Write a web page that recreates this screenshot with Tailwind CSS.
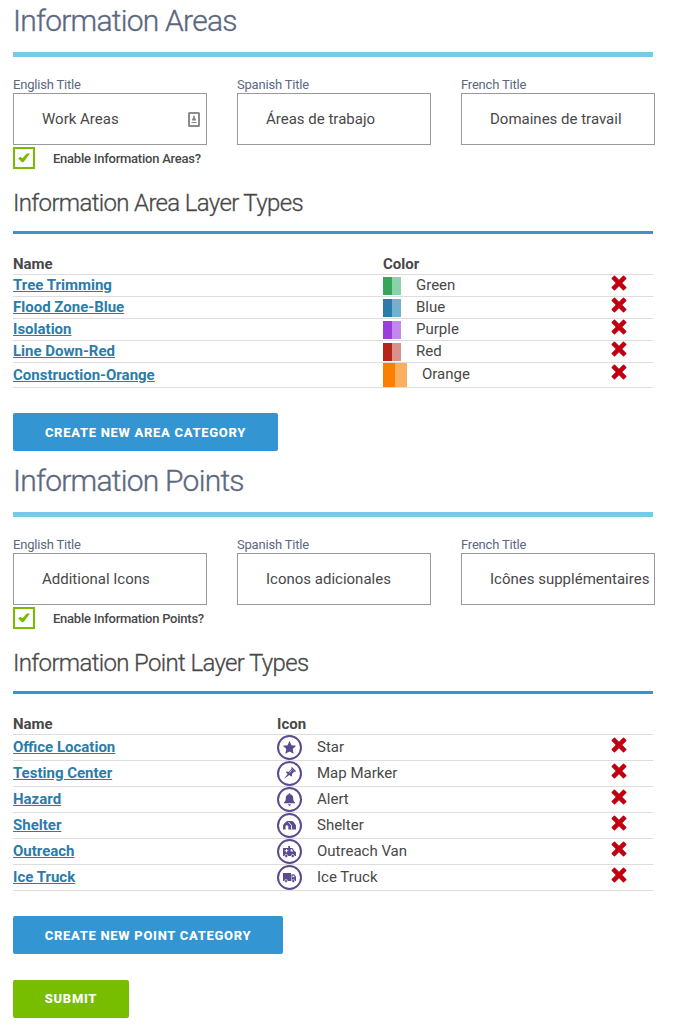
<!DOCTYPE html>
<html lang="en">
<head>
<meta charset="utf-8">
<title>Information Areas</title>
<script src="https://cdn.jsdelivr.net/npm/@tailwindcss/browser@4"></script>
</head>
<body class="bg-white font-[Roboto,sans-serif] text-[#484848]">
<svg class="hidden">
  <symbol id="x" viewBox="0 0 16 16"><path d="M.7 3 3 .7Q3.500.3 4 .7L8 4.700 12 .7Q12.500.3 13 .7L15.300 3Q15.700 3.500 15.300 4L11.300 8 15.300 12Q15.700 12.500 15.300 13L13 15.300Q12.500 15.700 12 15.300L8 11.300 4 15.300Q3.500 15.700 3 15.300L.7 13Q.3 12.500.7 12L4.700 8 .7 4Q.3 3.500.7 3Z" fill="#c00010"/></symbol>
  <symbol id="check" viewBox="0 0 12 10"><path d="M.2 5.500 2.300 3.800 4.500 5.300 8.700.4H12L6 8.600Q4.800 10 3.700 8.900Z" fill="#78be00"/></symbol>
</svg>
<main class="ml-[13px] w-[640px]">
  <section class="h-[460px]">
    <h1 class="h-[57px] border-b-5 border-[#79c9e8] pt-[3px] text-[30px] leading-[36px] font-light tracking-[-0.75px] text-[#5b6880] [-webkit-text-stroke:0.35px]">Information Areas</h1>
    <div class="mt-5 flex w-[642px] gap-[30px] text-[15px]">
      <label class="w-[194px]"><span class="block h-4 text-[13px] leading-4 tracking-[-0.2px] text-[#5b6880]">English Title</span>
        <span class="flex h-[52px] items-center justify-between border border-[#999] pr-[6px] pl-7">Work Areas
          <svg class="h-[15px] w-3" viewBox="0 0 12 15"><rect x="1" y="1" width="10" height="13" rx=".5" fill="#fff" stroke="#8b8b8b" stroke-width="2"/><path d="M6 3.500V6M3.500 10.500H8.500" stroke="#888" stroke-width="1"/><path d="M4 8.500V7.200L5 6V4.500H7V6L8 7.200V8.500Z" fill="#888"/></svg>
        </span></label>
      <label class="w-[194px]"><span class="block h-4 text-[13px] leading-4 tracking-[-0.2px] text-[#5b6880]">Spanish Title</span><span class="flex h-[52px] items-center border border-[#999] pl-7">Áreas de trabajo</span></label>
      <label class="w-[194px]"><span class="block h-4 text-[13px] leading-4 tracking-[-0.2px] text-[#5b6880]">French Title</span><span class="flex h-[52px] items-center border border-[#999] pl-7">Domaines de travail</span></label>
    </div>
    <div class="mt-[2px] flex h-[22px] items-center gap-[18px] text-[13px] font-medium tracking-[-0.24px]"><span class="flex size-[22px] items-center justify-center border-2 border-[#78be00]"><svg class="h-[10px] w-3"><use href="#check"/></svg></span><span class="pt-[2px]">Enable Information Areas?</span></div>
    <h2 class="mt-[17px] h-12 border-b-3 border-[#3395d1] pt-[3px] text-[24px] leading-[28px] font-light tracking-[-0.65px] [-webkit-text-stroke:0.3px]">Information Area Layer Types</h2>
    <div class="mt-5 text-[15px] leading-5">
      <div class="flex h-[21px] border-b border-[#ddd] font-bold"><span class="w-[370px]">Name</span><span>Color</span></div>
      <div class="flex h-[22px] border-b border-[#ddd]"><a class="w-[370px] font-bold text-[#2b7ca9] underline">Tree Trimming</a><span class="mt-[2px] h-[18px] w-[9px] bg-[#34a75a]"></span><span class="mt-[2px] h-[18px] w-[9px] bg-[#8ad2ab]"></span><span class="ml-[15px] w-[194px]">Green</span><svg class="ml-px size-4"><use href="#x"/></svg></div>
      <div class="flex h-[22px] border-b border-[#ddd]"><a class="w-[370px] font-bold text-[#2b7ca9] underline">Flood Zone-Blue</a><span class="mt-[2px] h-[18px] w-[9px] bg-[#2b7ca9]"></span><span class="mt-[2px] h-[18px] w-[9px] bg-[#74b0cd]"></span><span class="ml-[15px] w-[194px]">Blue</span><svg class="ml-px size-4"><use href="#x"/></svg></div>
      <div class="flex h-[22px] border-b border-[#ddd]"><a class="w-[370px] font-bold text-[#2b7ca9] underline">Isolation</a><span class="mt-[2px] h-[18px] w-[9px] bg-[#9c3cdb]"></span><span class="mt-[2px] h-[18px] w-[9px] bg-[#c388ec]"></span><span class="ml-[15px] w-[194px]">Purple</span><svg class="ml-px size-4"><use href="#x"/></svg></div>
      <div class="flex h-[22px] border-b border-[#ddd]"><a class="w-[370px] font-bold text-[#2b7ca9] underline">Line Down-Red</a><span class="mt-[2px] h-[18px] w-[9px] bg-[#b72518]"></span><span class="mt-[2px] h-[18px] w-[9px] bg-[#d9918b]"></span><span class="ml-[15px] w-[194px]">Red</span><svg class="ml-px size-4"><use href="#x"/></svg></div>
      <div class="flex h-[25px] border-b border-[#ddd]"><a class="w-[370px] pt-[2px] font-bold text-[#2b7ca9] underline">Construction-Orange</a><span class="h-6 w-3 bg-[#f98000]"></span><span class="h-6 w-3 bg-[#fbb060]"></span><span class="ml-[15px] w-[188px] pt-px">Orange</span><svg class="mt-px ml-px size-4"><use href="#x"/></svg></div>
    </div>
    <button class="mt-[25px] block h-[38px] w-[265px] rounded-[2px] bg-[#3395d1] pt-[2px] text-[13px] font-extrabold tracking-[0.7px] text-white">CREATE NEW AREA CATEGORY</button>
  </section>
  <section>
    <h1 class="h-[57px] border-b-5 border-[#79c9e8] pt-[3px] text-[30px] leading-[36px] font-light tracking-[-0.75px] text-[#5b6880] [-webkit-text-stroke:0.35px]">Information Points</h1>
    <div class="mt-5 flex w-[642px] gap-[30px] text-[15px]">
      <label class="w-[194px]"><span class="block h-4 text-[13px] leading-4 tracking-[-0.2px] text-[#5b6880]">English Title</span><span class="flex h-[52px] items-center border border-[#999] pl-7">Additional Icons</span></label>
      <label class="w-[194px]"><span class="block h-4 text-[13px] leading-4 tracking-[-0.2px] text-[#5b6880]">Spanish Title</span><span class="flex h-[52px] items-center border border-[#999] pl-7">Iconos adicionales</span></label>
      <label class="w-[194px]"><span class="block h-4 text-[13px] leading-4 tracking-[-0.2px] text-[#5b6880]">French Title</span><span class="flex h-[52px] items-center border border-[#999] pl-7 whitespace-nowrap">Icônes supplémentaires</span></label>
    </div>
    <div class="mt-[2px] flex h-[22px] items-center gap-[18px] text-[13px] font-medium tracking-[-0.24px]"><span class="flex size-[22px] items-center justify-center border-2 border-[#78be00]"><svg class="h-[10px] w-3"><use href="#check"/></svg></span><span class="pt-[2px]">Enable Information Points?</span></div>
    <h2 class="mt-[17px] h-12 border-b-3 border-[#3395d1] pt-[3px] text-[24px] leading-[28px] font-light tracking-[-0.65px] [-webkit-text-stroke:0.3px]">Information Point Layer Types</h2>
    <div class="mt-5 text-[15px] leading-5">
      <div class="flex h-[21px] border-b border-[#ddd] font-bold"><span class="w-[264px]">Name</span><span>Icon</span></div>
      <div class="flex h-[26px] border-b border-[#ddd]"><a class="w-[264px] pt-[2px] font-bold text-[#2b7ca9] underline">Office Location</a>
        <svg class="size-[25px]" viewBox="0 0 25 25" fill="#5b4a90"><circle cx="12.500" cy="12.500" r="11.500" fill="none" stroke="#5b4a90" stroke-width="2"/><path d="m12.500 6 2 4.200 4.600.6-3.400 3.200.9 4.700-4.100-2.300-4.100 2.300.9-4.700L5.900 10.800l4.600-.6Z"/></svg>
        <span class="ml-[15px] w-[293px] pt-[2px]">Star</span><svg class="mt-[2px] ml-px size-4"><use href="#x"/></svg></div>
      <div class="flex h-[26px] border-b border-[#ddd]"><a class="w-[264px] pt-[2px] font-bold text-[#2b7ca9] underline">Testing Center</a>
        <svg class="size-[25px]" viewBox="0 0 25 25" fill="#5b4a90"><circle cx="12.500" cy="12.500" r="11.500" fill="none" stroke="#5b4a90" stroke-width="2"/><path d="m14.600 7.500 3.200 3.200-1.600.8-1.300 1.400.2 2-1 .7-1.800-1.600L7 18l3.600-5-1.700-1.700.9-.8 2.100.2 1.600-1.600Z"/><path d="m14.500 6.500 4 4" stroke="#5b4a90" stroke-width="1.200"/><path d="m12.300 11.800 2.500-2.500" stroke="#fff" stroke-width=".7"/></svg>
        <span class="ml-[15px] w-[293px] pt-[2px]">Map Marker</span><svg class="mt-[2px] ml-px size-4"><use href="#x"/></svg></div>
      <div class="flex h-[26px] border-b border-[#ddd]"><a class="w-[264px] pt-[2px] font-bold text-[#2b7ca9] underline">Hazard</a>
        <svg class="size-[25px]" viewBox="0 0 25 25" fill="#5b4a90"><circle cx="12.500" cy="12.500" r="11.500" fill="none" stroke="#5b4a90" stroke-width="2"/><path d="M11.800 6.200h1.400v1c2.200.5 3 2 3 3.800 0 2.500.5 3.500 1.800 4.300v1H7v-1C8.300 14.500 8.800 13.500 8.800 11c0-1.800.8-3.300 3-3.800ZM11 17.200h3q-.4 1.500-1.500 1.500T11 17.200Z"/></svg>
        <span class="ml-[15px] w-[293px] pt-[2px]">Alert</span><svg class="mt-[2px] ml-px size-4"><use href="#x"/></svg></div>
      <div class="flex h-[26px] border-b border-[#ddd]"><a class="w-[264px] pt-[2px] font-bold text-[#2b7ca9] underline">Shelter</a>
        <svg class="size-[25px]" viewBox="0 0 25 25" fill="#5b4a90"><circle cx="12.500" cy="12.500" r="11.500" fill="none" stroke="#5b4a90" stroke-width="2"/><path d="M6 12.500Q6.500 11 9.300 8.500L10.800 8H15.500Q18.500 10.500 19 12.500V16.500H11.300V13L9.700 12 8.500 13V16.500H6Z"/><path d="m11.500 9 3 3.500V16.500" fill="none" stroke="#fff" stroke-width=".9"/></svg>
        <span class="ml-[15px] w-[293px] pt-[2px]">Shelter</span><svg class="mt-[2px] ml-px size-4"><use href="#x"/></svg></div>
      <div class="flex h-[26px] border-b border-[#ddd]"><a class="w-[264px] pt-[2px] font-bold text-[#2b7ca9] underline">Outreach</a>
        <svg class="size-[25px]" viewBox="0 0 25 25" fill="#5b4a90"><circle cx="12.500" cy="12.500" r="11.500" fill="none" stroke="#5b4a90" stroke-width="2"/><path d="M6 9h5.200V7h1.800v2h2.400l2 3 1.600 1.300V17H6Z"/><path d="M9.500 10v3.500M7.700 11.700h3.600" stroke="#fff" stroke-width=".9"/><path d="M13.700 10.300h1.200l1.300 2.200h-2.500Z" fill="#fff"/><circle cx="9.200" cy="17" r="1.600" stroke="#fff" stroke-width=".6"/><circle cx="15.800" cy="17" r="1.600" stroke="#fff" stroke-width=".6"/></svg>
        <span class="ml-[15px] w-[293px] pt-[2px]">Outreach Van</span><svg class="mt-[2px] ml-px size-4"><use href="#x"/></svg></div>
      <div class="flex h-[26px] border-b border-[#ddd]"><a class="w-[264px] pt-[2px] font-bold text-[#2b7ca9] underline">Ice Truck</a>
        <svg class="size-[25px]" viewBox="0 0 25 25" fill="#5b4a90"><circle cx="12.500" cy="12.500" r="11.500" fill="none" stroke="#5b4a90" stroke-width="2"/><path d="M6 8h8v8H6ZM14.500 9.300h2.500l2 2.500V16h-4.500Z"/><path d="M15.500 10.600h1.100l1.200 1.600h-2.300Z" fill="#fff"/><circle cx="9" cy="16" r="1.500" stroke="#fff" stroke-width=".6"/><circle cx="16.300" cy="16" r="1.500" stroke="#fff" stroke-width=".6"/></svg>
        <span class="ml-[15px] w-[293px] pt-[2px]">Ice Truck</span><svg class="mt-[2px] ml-px size-4"><use href="#x"/></svg></div>
    </div>
    <button class="mt-[25px] block h-[38px] w-[270px] rounded-[2px] bg-[#3395d1] pt-[2px] text-[13px] font-extrabold tracking-[0.7px] text-white">CREATE NEW POINT CATEGORY</button>
    <button class="mt-[26px] block h-[38px] w-[116px] rounded-[2px] bg-[#78be00] text-[13px] font-extrabold tracking-[0.7px] text-white">SUBMIT</button>
  </section>
</main>
</body>
</html>
